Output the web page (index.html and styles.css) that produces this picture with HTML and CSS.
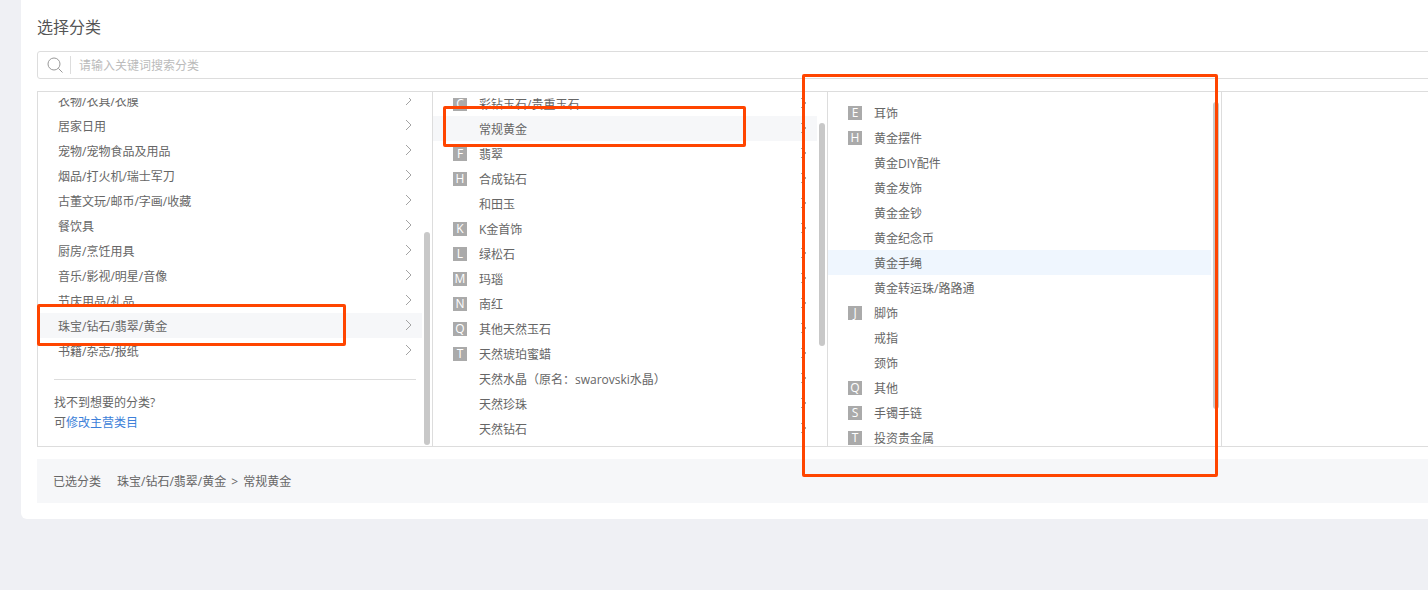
FILE: index.html
```html
<!DOCTYPE html>
<html lang="zh-CN">
<head>
<meta charset="utf-8">
<title>选择分类</title>
<link rel="stylesheet" href="styles.css">
</head>
<body>
<svg class="defs" aria-hidden="true"><symbol id="chev" viewBox="0 0 7 12"><path d="M1 1l5 5-5 5" fill="none" stroke="#a3a3a3" stroke-width="1"/></symbol></svg>
<main class="card">
  <h1 class="title">选择分类</h1>
  <div class="search">
    <svg class="search-icon" viewBox="0 0 16 16"><circle cx="7" cy="7" r="6" fill="none" stroke="#999" stroke-width="1"/><path d="M11.4 11.4l4.1 4.1" fill="none" stroke="#999" stroke-width="1"/></svg>
    <span class="search-sep"></span>
    <span class="search-hint">请输入关键词搜索分类</span>
  </div>
  <section class="panel">
    <div class="col col-1">
      <div class="clip">
        <ul class="list list-1">
          <li class="row">衣物/衣具/衣膜<svg class="chev"><use href="#chev"/></svg></li>
          <li class="row">居家日用<svg class="chev"><use href="#chev"/></svg></li>
          <li class="row">宠物/宠物食品及用品<svg class="chev"><use href="#chev"/></svg></li>
          <li class="row">烟品/打火机/瑞士军刀<svg class="chev"><use href="#chev"/></svg></li>
          <li class="row">古董文玩/邮币/字画/收藏<svg class="chev"><use href="#chev"/></svg></li>
          <li class="row">餐饮具<svg class="chev"><use href="#chev"/></svg></li>
          <li class="row">厨房/烹饪用具<svg class="chev"><use href="#chev"/></svg></li>
          <li class="row">音乐/影视/明星/音像<svg class="chev"><use href="#chev"/></svg></li>
          <li class="row">节庆用品/礼品<svg class="chev"><use href="#chev"/></svg></li>
          <li class="row active">珠宝/钻石/翡翠/黄金<svg class="chev"><use href="#chev"/></svg></li>
          <li class="row">书籍/杂志/报纸<svg class="chev"><use href="#chev"/></svg></li>
        </ul>
        <div class="hint">
          <p>找不到想要的分类?</p>
          <p>可<a class="link" href="#">修改主营类目</a></p>
        </div>
      </div>
      <span class="thumb thumb-1"></span>
    </div>
    <div class="col col-2">
      <div class="clip">
        <ul class="list list-2">
          <li class="row"><b class="tag">C</b><span>彩钻玉石/贵重玉石</span><svg class="chev"><use href="#chev"/></svg></li>
          <li class="row active"><b class="tag none"></b><span>常规黄金</span><svg class="chev"><use href="#chev"/></svg></li>
          <li class="row"><b class="tag">F</b><span>翡翠</span><svg class="chev"><use href="#chev"/></svg></li>
          <li class="row"><b class="tag">H</b><span>合成钻石</span><svg class="chev"><use href="#chev"/></svg></li>
          <li class="row"><b class="tag none"></b><span>和田玉</span><svg class="chev"><use href="#chev"/></svg></li>
          <li class="row"><b class="tag">K</b><span>K金首饰</span><svg class="chev"><use href="#chev"/></svg></li>
          <li class="row"><b class="tag">L</b><span>绿松石</span><svg class="chev"><use href="#chev"/></svg></li>
          <li class="row"><b class="tag">M</b><span>玛瑙</span><svg class="chev"><use href="#chev"/></svg></li>
          <li class="row"><b class="tag">N</b><span>南红</span><svg class="chev"><use href="#chev"/></svg></li>
          <li class="row"><b class="tag">Q</b><span>其他天然玉石</span><svg class="chev"><use href="#chev"/></svg></li>
          <li class="row"><b class="tag">T</b><span>天然琥珀蜜蜡</span><svg class="chev"><use href="#chev"/></svg></li>
          <li class="row"><b class="tag none"></b><span>天然水晶（原名：swarovski水晶）</span><svg class="chev"><use href="#chev"/></svg></li>
          <li class="row"><b class="tag none"></b><span>天然珍珠</span><svg class="chev"><use href="#chev"/></svg></li>
          <li class="row"><b class="tag none"></b><span>天然钻石</span><svg class="chev"><use href="#chev"/></svg></li>
        </ul>
      </div>
      <span class="thumb thumb-2"></span>
    </div>
    <div class="col col-3">
      <ul class="list list-3">
        <li class="row"><b class="tag">E</b><span>耳饰</span></li>
        <li class="row"><b class="tag">H</b><span>黄金摆件</span></li>
        <li class="row"><b class="tag none"></b><span>黄金DIY配件</span></li>
        <li class="row"><b class="tag none"></b><span>黄金发饰</span></li>
        <li class="row"><b class="tag none"></b><span>黄金金钞</span></li>
        <li class="row"><b class="tag none"></b><span>黄金纪念币</span></li>
        <li class="row selected"><b class="tag none"></b><span>黄金手绳</span></li>
        <li class="row"><b class="tag none"></b><span>黄金转运珠/路路通</span></li>
        <li class="row"><b class="tag">J</b><span>脚饰</span></li>
        <li class="row"><b class="tag none"></b><span>戒指</span></li>
        <li class="row"><b class="tag none"></b><span>颈饰</span></li>
        <li class="row"><b class="tag">Q</b><span>其他</span></li>
        <li class="row"><b class="tag">S</b><span>手镯手链</span></li>
        <li class="row"><b class="tag">T</b><span>投资贵金属</span></li>
      </ul>
      <span class="thumb thumb-3"></span>
    </div>
    <div class="col col-4"></div>
  </section>
  <div class="picked">
    <span class="picked-label">已选分类</span>
    <span>珠宝/钻石/翡翠/黄金 <span class="sep">&gt;</span> 常规黄金</span>
  </div>
</main>
<div class="mark mark-1"></div>
<div class="mark mark-2"></div>
<div class="mark mark-3"></div>
</body>
</html>
```

FILE: styles.css
```css
* { box-sizing: border-box; }
html, body { height: 100%; }
body {
  margin: 0;
  overflow: hidden;
  background: #eff0f4;
  color: #666;
  font: 12px/25px "Open Sans", "Noto Sans CJK SC", "Liberation Sans", sans-serif;
}
ul, p, h1 { margin: 0; padding: 0; }
ul { list-style: none; }
.defs { display: none; }
.card {
  width: 1560px;
  height: 519px;
  margin-left: 21px;
  padding: 15px 16px 16px;
  background: #fff;
  border-radius: 0 0 0 6px;
}
.title {
  height: 24px;
  font-size: 16px;
  font-weight: 400;
  line-height: 24px;
  color: #555;
}
.search {
  display: flex;
  align-items: center;
  height: 28px;
  margin-top: 12px;
  padding-left: 9px;
  border: 1px solid #ddd;
  border-radius: 3px;
}
.search-icon { width: 16px; height: 16px; }
.search-sep { width: 1px; height: 18px; margin: 0 8px 0 7px; background: #ddd; }
.search-hint { color: #bbb; }
.panel {
  display: flex;
  height: 356px;
  margin-top: 12px;
  border: 1px solid #ddd;
}
.col {
  position: relative;
  flex: none;
  display: flex;
  flex-direction: column;
  height: 100%;
  overflow: hidden;
  border-right: 1px solid #ddd;
}
.col-1, .col-2 { width: 395px; }
.col-3 { width: 394px; }
.col-4 { flex: 1; border-right: 0; }
.clip { flex: 1; min-height: 0; margin-top: 6px; overflow: hidden; }
.row {
  display: flex;
  align-items: center;
  height: 25px;
  padding-top: 2px;
  white-space: nowrap;
}
.list-1 { margin-top: -10px; width: 384px; }
.list-1 .row { padding-left: 20px; }
.list-1 .chev { margin: 0 10px 3px auto; }
.list-2 { margin-top: -7px; width: 384px; }
.list-2 .row { padding-left: 20px; }
.list-2 .chev { margin: 0 10px 3px auto; }
.list-3 { margin-top: 8px; width: 383px; }
.list-3 .row { padding-left: 20px; }
.chev { flex: none; width: 7px; height: 12px; }
.active { background: #f6f7f9; }
.selected { background: #eff6fe; }
.tag {
  flex: none;
  width: 14px;
  height: 14px;
  margin: 0 12px 2px 0;
  background: #aaa;
  color: #fff;
  font: 400 12px/14px "Open Sans", "Liberation Sans", sans-serif;
  text-align: center;
}
.tag.none { background: none; }
.hint {
  width: 362px;
  margin: 16px 0 0 16px;
  padding-top: 13px;
  border-top: 1px solid #ddd;
  line-height: 20px;
}
.link { color: #3d7fd9; text-decoration: none; }
.thumb {
  position: absolute;
  width: 6px;
  border-radius: 3px;
  background: #c8c8c8;
}
.thumb-1 { left: 386px; top: 140px; height: 213px; }
.thumb-2 { left: 386px; top: 31px; height: 223px; }
.thumb-3 { left: 385px; top: 10px; height: 307px; }
.picked {
  display: flex;
  gap: 16px;
  align-items: center;
  height: 44px;
  margin-top: 12px;
  padding-left: 16px;
  background: #f6f7f9;
}
.sep { margin: 0 2px; }
.mark {
  position: absolute;
  border: 3px solid #ff4500;
  border-radius: 2px;
}
.mark-1 { left: 37px; top: 304px; width: 309px; height: 42px; }
.mark-2 { left: 443px; top: 106px; width: 303px; height: 41px; }
.mark-3 { left: 802px; top: 74px; width: 416px; height: 403px; }
```
